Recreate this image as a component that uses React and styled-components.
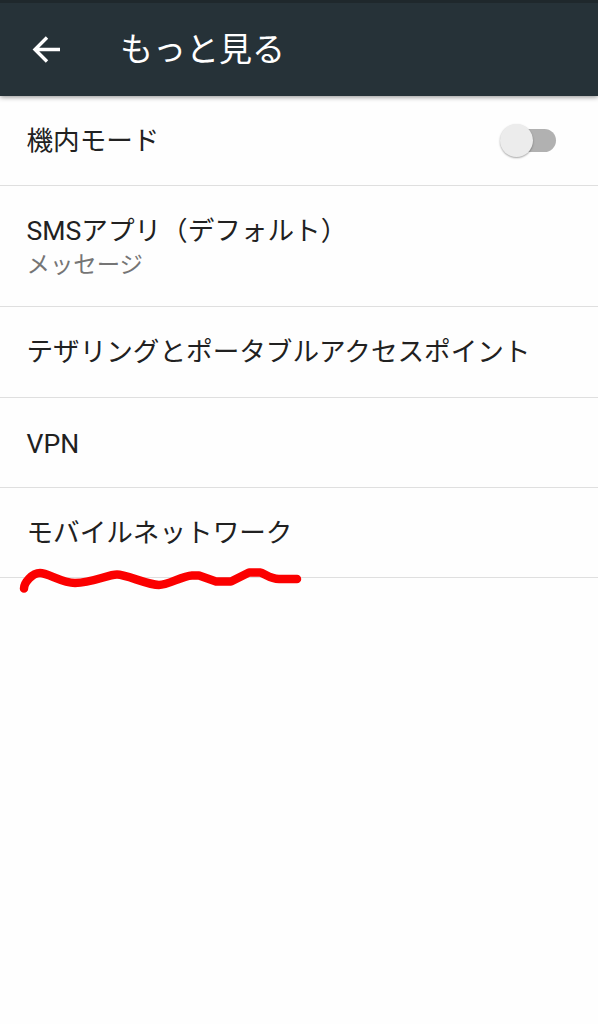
import React, { useState } from 'react';
import styled, { createGlobalStyle } from 'styled-components';

const GlobalStyle = createGlobalStyle`
  body {
    margin: 0;
    background: #fefefe;
    font-family: Roboto, 'Noto Sans CJK JP', sans-serif;
  }
`;

const Screen = styled.div`
  min-height: 1024px;
  overflow: hidden;
`;

const Header = styled.header`
  display: flex;
  align-items: center;
  box-sizing: border-box;
  height: 96px;
  padding: 0 0 0 32px;
  border-top: 3px solid #1f282c;
  background: #263238;
  box-shadow: 0 1px 5px rgba(0, 0, 0, 0.45);
`;

const BackButton = styled.button`
  display: flex;
  margin: 0 58px 0 0;
  padding: 0;
  border: 0;
  background: none;
`;

const Title = styled.h1`
  margin: 0;
  color: #fff;
  font-size: 33px;
  font-weight: 400;
  line-height: 40px;
`;

const SettingsList = styled.ul`
  margin: 0;
  padding: 0;
  list-style: none;
`;

const SettingRow = styled.li`
  position: relative;
  display: flex;
  align-items: center;
  justify-content: space-between;
  box-sizing: border-box;
  height: ${(props) => props.$height}px;
  padding: ${(props) => props.$offset || 0}px 42px 0 26.5px;
  border-bottom: 1px solid #dfdfdf;
`;

const SettingName = styled.div`
  color: #212121;
  font-size: 26.6px;
  line-height: 36px;
  white-space: nowrap;
`;

const SettingSummary = styled.div`
  color: #757575;
  font-size: 23.4px;
  line-height: 32px;
`;

const Switch = styled.button`
  position: relative;
  width: 52px;
  height: 23px;
  padding: 0;
  border: 0;
  border-radius: 12px;
  background: #b1b1b1;
`;

const SwitchThumb = styled.span`
  position: absolute;
  top: -5px;
  left: ${(props) => (props.$on ? '20px' : '-4.5px')};
  width: 33px;
  height: 33px;
  border-radius: 50%;
  background: #ececec;
  box-shadow: 0 1px 2px rgba(0, 0, 0, 0.35);
`;

const Underline = styled.svg`
  position: absolute;
  left: 15px;
  top: 72px;
`;

const settings = [
  { name: '機内モード', height: 90, toggle: true },
  {
    name: 'SMSアプリ（デフォルト）',
    summary: 'メッセージ',
    height: 121,
    offset: 2,
  },
  { name: 'テザリングとポータブルアクセスポイント', height: 91 },
  { name: 'VPN', height: 90, offset: 2 },
  { name: 'モバイルネットワーク', height: 90, marked: true },
];

const App = () => {
  const [airplaneMode, setAirplaneMode] = useState(false);

  return (
    <Screen>
      <GlobalStyle />
      <Header>
        <BackButton aria-label="戻る">
          <svg width="30" height="28" viewBox="0 0 30 28" fill="none">
            <path
              d="M28 13.5H4M15 1.5L3 13.5l12 12"
              stroke="#fff"
              strokeWidth="3.4"
            />
          </svg>
        </BackButton>
        <Title>もっと見る</Title>
      </Header>
      <SettingsList>
        {settings.map(({ name, summary, height, offset, toggle, marked }) => (
          <SettingRow key={name} $height={height} $offset={offset}>
            <div>
              <SettingName>{name}</SettingName>
              {summary && <SettingSummary>{summary}</SettingSummary>}
            </div>
            {toggle && (
              <Switch
                role="switch"
                aria-label={name}
                aria-checked={airplaneMode}
                onClick={() => setAirplaneMode(!airplaneMode)}
              >
                <SwitchThumb $on={airplaneMode} />
              </Switch>
            )}
            {marked && (
              <Underline width="295" height="40" viewBox="15 560 295 40">
                <path
                  d="M24 588.5C24 583 32 573 40 573C48 573 62 583 75 583C92 583 108 574.5 117 574.5C126 574.5 148 585 159 585C168 585 182 576 192 575.5H199L216 581.5H231L249 572.5H260C264 573 270 579 279 579H297"
                  fill="none"
                  stroke="#fb0000"
                  strokeWidth="8.5"
                  strokeLinecap="round"
                  strokeLinejoin="round"
                />
              </Underline>
            )}
          </SettingRow>
        ))}
      </SettingsList>
    </Screen>
  );
};

export default App;
